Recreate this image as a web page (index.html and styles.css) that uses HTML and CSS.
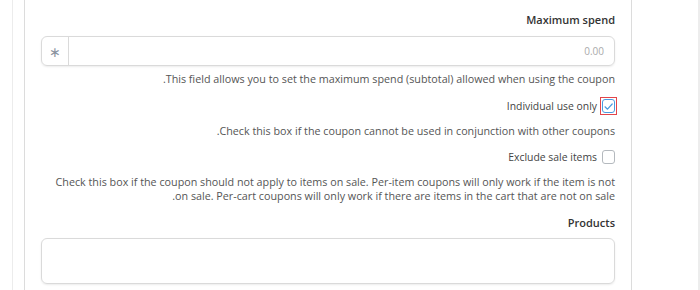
FILE: index.html
```html
<!DOCTYPE html>
<html>
<head>
<meta charset="utf-8">
<link rel="stylesheet" href="styles.css">
</head>
<body>
<div class="outer">
  <div class="card" dir="rtl">
    <div class="label">Maximum spend</div>
    <div class="input">
      <span class="prefix">∗</span>
      <span class="value">0.00</span>
    </div>
    <p class="desc d1">This field allows you to set the maximum spend (subtotal) allowed when using the coupon.</p>
    <div class="check-row r1">
      <span class="focus">
        <span class="box checked">
          <svg width="11" height="11" viewBox="0 0 11 11"><path d="M2 5.8 L4.5 8.2 L9.2 3" fill="none" stroke="#4a9be0" stroke-width="1.2" stroke-linecap="round" stroke-linejoin="round"/></svg>
        </span>
      </span>
      <span class="check-label">Individual use only</span>
    </div>
    <p class="desc d2">Check this box if the coupon cannot be used in conjunction with other coupons.</p>
    <div class="check-row r2">
      <span class="box"></span>
      <span class="check-label">Exclude sale items</span>
    </div>
    <p class="desc d3">Check this box if the coupon should not apply to items on sale. Per-item coupons will only work if the item is not on sale. Per-cart coupons will only work if there are items in the cart that are not on sale.</p>
    <div class="label products">Products</div>
    <div class="area"></div>
  </div>
</div>
</body>
</html>
```
FILE: styles.css
```css
html, body {
  margin: 0;
  padding: 0;
  background: #fff;
}
body {
  font-family: "Open Sans", "Noto Sans", sans-serif;
  color: #555;
}
.outer {
  margin-left: 12px;
  width: 674px;
  height: 290px;
  border-left: 1px solid #ececec;
  border-right: 2px solid #ededed;
  padding-left: 11px;
  display: flex;
  overflow: hidden;
}
.card {
  border-left: 1px solid #dcdcdc;
  border-right: 1px solid #dcdcdc;
  padding: 12px 16px 0 16px;
  box-sizing: content-box;
  width: 574px;
}
.label {
  font-size: 11px;
  line-height: 16px;
  font-weight: 600;
  color: #333;
}
.input {
  margin-top: 8px;
  height: 28px;
  border: 1px solid #dadada;
  border-radius: 6px;
  box-shadow: 0 1px 2px rgba(0,0,0,0.08);
  display: flex;
  align-items: stretch;
}
.value {
  flex: 1;
  display: flex;
  align-items: center;
  padding-right: 10px;
  font-size: 10px;
  color: #aaa;
}
.prefix {
  order: 2;
  width: 26px;
  border-right: 1px solid #dadada;
  display: flex;
  align-items: center;
  justify-content: center;
  font-size: 14px;
  color: #8a93a0;
}
.desc {
  margin: 0;
  font-size: 10.75px;
  line-height: 16px;
  color: #555;
}
.d1 { margin-top: 5px; }
.check-row {
  display: flex;
  align-items: center;
  height: 20px;
  gap: 5px;
}
.r1 { margin-top: 9px; }
.r2 { margin-top: 8px; }
.d2 { margin-top: 7px; }
.d3 { margin-top: 8px; line-height: 14px; }
.check-label {
  font-size: 10.4px;
  color: #444;
}
.focus {
  display: flex;
  border: 1px solid #e2454a;
  padding: 1px;
  margin: -2px;
}
.box {
  width: 11px;
  height: 12px;
  border: 1px solid #b4b9be;
  border-radius: 3px;
  display: flex;
  align-items: center;
  justify-content: center;
}
.box.checked {
  border-color: #4a9be0;
}
.products { margin-top: 12px; }
.area {
  margin-top: 7px;
  height: 44px;
  border: 1px solid #dadada;
  border-radius: 6px;
  box-shadow: 0 1px 2px rgba(0,0,0,0.08);
}
```
